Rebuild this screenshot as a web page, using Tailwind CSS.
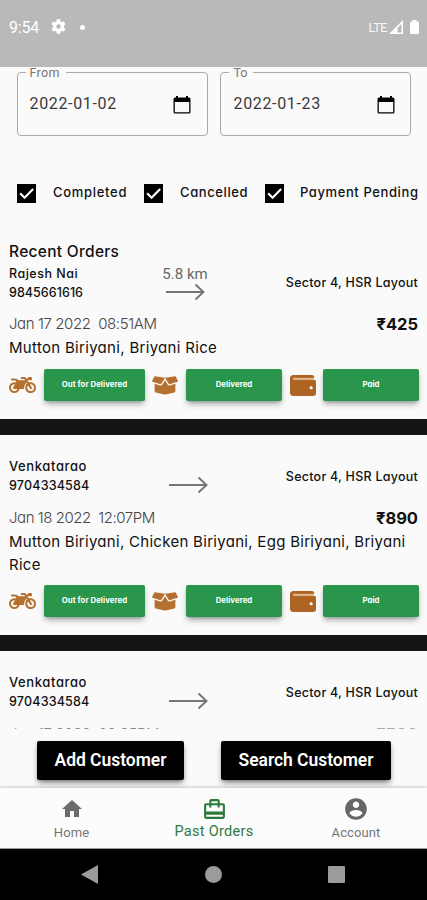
<!DOCTYPE html>
<html lang="en">
<head>
<meta charset="utf-8">
<meta name="viewport" content="width=device-width, initial-scale=1">
<title>Past Orders</title>
<script src="https://cdn.jsdelivr.net/npm/@tailwindcss/browser@4"></script>
</head>
<body class="w-[427px] h-[900px] overflow-hidden bg-[#fafafa] font-['Inter',sans-serif] text-[#111] [font-feature-settings:'cv11'] flex flex-col">
<svg class="hidden">
  <symbol id="bike" viewBox="0 0 640 512"><path d="M512.9 192c-14.9-.1-29.1 2.3-42.4 6.9L437.6 144H520c13.3 0 24-10.7 24-24V88c0-13.3-10.7-24-24-24h-45.3c-6.8 0-13.3 2.9-17.8 7.9l-37.5 41.7-22.8-38C392.2 68.4 384.4 64 376 64h-80c-8.8 0-16 7.2-16 16v16c0 8.8 7.2 16 16 16h66.4l19.2 32H227.9c-17.7-23.1-44.9-40-99.9-40H72.5C59 104 47.7 115 48 128.5c.2 13 10.9 23.5 24 23.5h56c24.5 0 38.7 10.9 47.8 24.8l-11.3 20.5c-13-3.9-26.9-5.7-41.3-5.2C55.9 194.5 1.6 249.6 0 317c-1.6 72.1 56.3 131 128 131 59.6 0 109.7-40.8 124-96h84.2c13.7 0 24.6-11.4 24-25.1-2.1-47.1 17.5-93.7 56.2-125l12.5 20.8c-27.6 23.7-45.1 58.9-44.8 98.2.5 69.6 57.2 126.5 126.8 127.1 71.6.7 129.8-57.5 129.2-129.1-.7-69.6-57.6-126.4-127.2-126.9zM128 400c-44.1 0-80-35.9-80-80s35.9-80 80-80c4.2 0 8.4.3 12.5 1L99 316.4c-8.8 16 2.8 35.6 21 35.6h81.3c-12.4 28.2-40.6 48-73.3 48zm463.9-75.6c-2.2 40.6-35 73.4-75.5 75.5-46.1 2.5-84.4-34.3-84.4-79.9 0-21.4 8.4-40.8 22.1-55.1l49.4 82.4c4.5 7.6 14.4 10 22 5.500l13.7-8.2c7.6-4.5 10-14.4 5.500-22l-48.6-80.9c5.2-1.1 10.5-1.6 15.9-1.6 45.6-.1 82.3 38.2 79.9 84.3z"/></symbol>
  <symbol id="box" viewBox="0 24 640 464" preserveAspectRatio="none"><path d="M425.7 256c-16.9 0-32.8-9-41.4-23.4L320 126l-64.2 106.6c-8.7 14.5-24.6 23.5-41.5 23.5-4.5 0-9-.6-13.3-1.9L64 215v178c0 14.7 10 27.5 24.2 31l216.2 54.1c10.2 2.5 20.9 2.5 31 0L551.8 424c14.2-3.6 24.2-16.4 24.2-31V215l-137 39.1c-4.3 1.3-8.8 1.9-13.3 1.9zm212.6-112.2L586.8 41c-3.1-6.2-9.8-9.8-16.7-8.9L320 64l91.7 152.1c3.8 6.3 11.4 9.3 18.5 7.3l197.9-56.5c9.9-2.9 14.7-13.9 10.2-23.1zM53.2 41L1.7 143.8c-4.6 9.2.3 20.2 10.1 23l197.9 56.5c7.1 2 14.7-1 18.5-7.3L320 64 69.8 32.1c-6.9-.8-13.5 2.7-16.6 8.9z"/></symbol>
  <symbol id="wallet" viewBox="0 32 512 448" preserveAspectRatio="none"><path d="M461.2 128H80c-8.84 0-16-7.16-16-16s7.16-16 16-16h384c8.84 0 16-7.16 16-16 0-26.51-21.49-48-48-48H64C28.65 32 0 60.65 0 96v320c0 35.35 28.65 64 64 64h397.2c28.02 0 50.8-21.53 50.8-48V176c0-26.47-22.78-48-50.8-48zM416 336c-17.67 0-32-14.33-32-32s14.33-32 32-32 32 14.33 32 32-14.33 32-32 32z"/><path class="fill-[#dfb68e]" d="M64 92H464V134H64Z"/></symbol>
  <symbol id="arrow" viewBox="0 0 39 18"><path d="M0 9H37M29.500 1.500L37.500 9L29.500 16.500" fill="none" stroke="#757575" stroke-width="1.900"/></symbol>
  <symbol id="check" viewBox="0 0 20 20"><path d="M0 0H20V20H0Z"/><path d="M3.300 9.800L8 14.400L17 5.200" fill="none" stroke="#fff" stroke-width="2.300"/></symbol>
  <symbol id="cal" viewBox="0 0 18 18"><path d="M3 0H5V1.500H13V0H15V1.500H16Q17.500 1.500 17.500 3V16Q17.500 17.500 16 17.500H2Q.5 17.500 .5 16V3Q.5 1.500 2 1.500H3ZM1.800 6V16.200H16.200V6Z" fill-rule="evenodd"/></symbol>
</svg>

<header class="h-[67px] shrink-0 bg-[#b9b9b9] flex items-start pt-[18px] pl-[9px] pr-[8px] text-white font-['Roboto',sans-serif]">
  <span class="text-[16px] leading-[20px] w-[42px] tracking-[-0.200px]">9:54</span>
  <svg class="w-[15px] h-[15px] mt-[1px]" viewBox="2 2 20 20" fill="#fff"><path d="M19.140 12.940c.04-.3.060-.61.060-.94 0-.32-.02-.64-.07-.94l2.030-1.580c.18-.14.23-.41.12-.61l-1.920-3.320c-.12-.22-.37-.29-.59-.22l-2.390.96c-.5-.38-1.030-.7-1.620-.94l-.36-2.540c-.04-.24-.24-.41-.48-.41h-3.840c-.24 0-.43.17-.47.41l-.36 2.540c-.59.24-1.130.57-1.620.94l-2.390-.96c-.22-.08-.47 0-.59.22L2.740 8.870c-.12.21-.08.47.12.61l2.030 1.580c-.05.3-.09.63-.09.94s.02.64.07.94l-2.030 1.580c-.18.14-.23.41-.12.61l1.920 3.320c.12.22.37.29.59.22l2.390-.96c.5.38 1.030.7 1.620.94l.36 2.540c.05.24.24.41.48.41h3.840c.24 0 .44-.17.47-.41l.36-2.540c.59-.24 1.130-.56 1.620-.94l2.390.96c.22.08.47 0 .59-.22l1.920-3.320c.12-.22.07-.47-.12-.61l-2.010-1.580zM12 15a3 3 0 1 1 0-6 3 3 0 0 1 0 6z"/></svg>
  <span class="size-[5px] rounded-full bg-white ml-[14px] mt-[7px]"></span>
  <span class="ml-auto text-[12.500px] leading-[19px] tracking-[-0.400px] text-white/90">LTE</span>
  <svg class="w-[14px] h-[14px] ml-[2px] mt-[2px]" viewBox="0 0 14 14"><path fill-rule="evenodd" fill="#fff" d="M14 0V14H0ZM12.500 4L8.500 8V12.500H12.500Z"/></svg>
  <svg class="w-[9px] h-[14px] ml-[7px] mt-[2px]" viewBox="0 0 9 14"><path fill="#fff" d="M2.500 0H6.500V1.500H8Q9 1.500 9 2.500V13Q9 14 8 14H1Q0 14 0 13V2.500Q0 1.500 1 1.500H2.500Z"/></svg>
</header>

<main class="h-[662px] shrink-0 overflow-hidden">
  <section class="flex gap-[12px] px-[16.500px] pt-[5px] font-['Roboto',sans-serif]">
    <div class="relative w-[192px] h-[64px] border border-[#aaa] rounded-[4px] flex items-center justify-between pl-[12px] pr-[17px]">
      <span class="absolute left-[8px] top-[-8px] bg-[#fafafa] pl-[4px] pr-[6px] text-[12.500px] leading-[16px] tracking-[0.300px] text-[#777]">From</span>
      <span class="text-[16px] tracking-[0.650px] text-[#3a3a3a] -mt-px">2022-01-02</span>
      <svg class="size-[18px] -mr-px mt-[2px]"><use href="#cal"/></svg>
    </div>
    <div class="relative w-[192px] h-[64px] border border-[#aaa] rounded-[4px] flex items-center justify-between pl-[13px] pr-[16px]">
      <span class="absolute left-[8px] top-[-8px] bg-[#fafafa] pl-[5px] pr-[6px] text-[12.500px] leading-[16px] text-[#777]">To</span>
      <span class="text-[16px] tracking-[0.650px] text-[#3a3a3a] -mt-px">2022-01-23</span>
      <svg class="size-[18px] -mr-px mt-[2px]"><use href="#cal"/></svg>
    </div>
  </section>

  <section class="flex items-center mt-[47px] pl-[17px] h-[20px] text-[13px] font-medium whitespace-nowrap">
    <svg class="size-[19px] mr-[17px] shrink-0"><use href="#check"/></svg><span class="w-[91px] tracking-[0.700px]">Completed</span>
    <svg class="size-[19px] mr-[17px] shrink-0"><use href="#check"/></svg><span class="w-[85px] tracking-[0.600px]">Cancelled</span>
    <svg class="size-[19px] mr-[16px] shrink-0"><use href="#check"/></svg><span class="tracking-[0.600px]">Payment Pending</span>
  </section>

  <h1 class="mt-[37px] ml-[9px] h-[24px] leading-[24px] text-[15.500px] font-medium tracking-[0.300px]">Recent Orders</h1>

  <article class="pl-[9px] pr-[8px] h-[155px]">
    <div class="flex h-[39px] pr-px text-[12.500px] font-medium leading-[19px]">
      <div class="w-[148px]"><p class="tracking-[0.500px]">Rajesh Nai</p><p class="tracking-[0.050px]">9845661616</p></div>
      <div class="w-[56px] flex flex-col items-center font-['Roboto',sans-serif] font-normal text-[15px] text-[#666] leading-[20px]"><span class="whitespace-nowrap">5.8 km</span><svg class="w-[39px] h-[18px] -mt-px"><use href="#arrow"/></svg></div>
      <p class="ml-auto pt-[9px] whitespace-nowrap tracking-[0.250px]">Sector 4, HSR Layout</p>
    </div>
    <div class="flex justify-between mt-[10px] pr-px h-[22px] leading-[22px]">
      <p class="text-[15px] font-light tracking-[-0.400px] text-[#444] whitespace-pre">Jan 17 2022  08:51AM</p><p class="text-[16.500px] font-bold">₹425</p>
    </div>
    <p class="mt-[1px] text-[15px] leading-[23px] tracking-[0.310px]">Mutton Biriyani, Briyani Rice</p>
    <div class="flex items-center mt-[10px] h-[32px] text-[7.800px] tracking-[0.050px] font-bold text-white">
      <svg class="w-[27px] h-[22px] fill-[#b5702f]"><use href="#bike"/></svg>
      <div class="w-[101px] h-[32px] ml-[8px] rounded-[2px] bg-[#2a964b] shadow-md shadow-black/30 flex items-center justify-center">Out for Delivered</div>
      <svg class="w-[26px] h-[19px] ml-[7px] fill-[#b5702f]"><use href="#box"/></svg>
      <div class="w-[96px] h-[32px] ml-[8px] rounded-[2px] bg-[#2a964b] shadow-md shadow-black/30 flex items-center justify-center">Delivered</div>
      <svg class="w-[26px] h-[21px] ml-[8px] fill-[#ae6523]"><use href="#wallet"/></svg>
      <div class="w-[96px] h-[32px] ml-[7px] rounded-[2px] bg-[#2a964b] shadow-md shadow-black/30 flex items-center justify-center">Paid</div>
    </div>
  </article>

  <div class="h-[16px] bg-[#141414]"></div>

  <article class="pl-[9px] pr-[8px] pt-[22px] h-[200px]">
    <div class="flex h-[39px] pr-px text-[12.500px] font-medium leading-[19px]">
      <div class="w-[160px]"><p class="text-[13px] tracking-[0.600px]">Venkatarao</p><p class="tracking-[0.200px]">9704334584</p></div>
      <svg class="w-[39px] h-[18px] mt-[19px]"><use href="#arrow"/></svg>
      <p class="ml-auto pt-[10px] whitespace-nowrap tracking-[0.250px]">Sector 4, HSR Layout</p>
    </div>
    <div class="flex justify-between mt-[11px] pr-px h-[22px] leading-[22px]">
      <p class="text-[15px] font-light tracking-[-0.450px] text-[#444] whitespace-pre">Jan 18 2022  12:07PM</p><p class="text-[16.500px] font-bold">₹890</p>
    </div>
    <p class="mt-px text-[15px] leading-[23px] whitespace-nowrap tracking-[0.290px]">Mutton Biriyani, Chicken Biriyani, Egg Biriyani, Briyani<br>Rice</p>
    <div class="flex items-center mt-[9px] h-[32px] text-[7.800px] tracking-[0.050px] font-bold text-white">
      <svg class="w-[27px] h-[22px] fill-[#b5702f]"><use href="#bike"/></svg>
      <div class="w-[101px] h-[32px] ml-[8px] rounded-[2px] bg-[#2a964b] shadow-md shadow-black/30 flex items-center justify-center">Out for Delivered</div>
      <svg class="w-[26px] h-[19px] ml-[7px] fill-[#b5702f]"><use href="#box"/></svg>
      <div class="w-[96px] h-[32px] ml-[8px] rounded-[2px] bg-[#2a964b] shadow-md shadow-black/30 flex items-center justify-center">Delivered</div>
      <svg class="w-[26px] h-[21px] ml-[8px] fill-[#ae6523]"><use href="#wallet"/></svg>
      <div class="w-[96px] h-[32px] ml-[7px] rounded-[2px] bg-[#2a964b] shadow-md shadow-black/30 flex items-center justify-center">Paid</div>
    </div>
  </article>

  <div class="h-[16px] bg-[#141414]"></div>

  <article class="px-[9px] pt-[22px]">
    <div class="flex h-[39px] text-[12.500px] font-medium leading-[19px]">
      <div class="w-[160px]"><p class="text-[13px] tracking-[0.600px]">Venkatarao</p><p class="tracking-[0.200px]">9704334584</p></div>
      <svg class="w-[39px] h-[18px] mt-[19px]"><use href="#arrow"/></svg>
      <p class="ml-auto pt-[10px] whitespace-nowrap tracking-[0.250px]">Sector 4, HSR Layout</p>
    </div>
    <div class="flex justify-between mt-[11px] h-[22px] leading-[22px]">
      <p class="text-[15px] font-light tracking-[-0.400px] text-[#888] whitespace-pre">Jan 17 2022  08:25PM</p><p class="text-[16.500px] font-bold text-[#aaa]">₹580</p>
    </div>
  </article>
</main>

<section class="h-[59px] shrink-0 flex items-start pt-[12px] pl-[37px] gap-[37px] font-['Roboto',sans-serif] text-[17.500px] font-semibold tracking-[-0.050px] text-white">
  <button class="w-[147px] h-[39px] bg-black rounded-[2px] shadow-md shadow-black/40 whitespace-nowrap">Add Customer</button>
  <button class="w-[170px] h-[39px] bg-black rounded-[2px] shadow-md shadow-black/40 whitespace-nowrap">Search Customer</button>
</section>

<nav class="h-[61px] shrink-0 bg-[#fcfcfc] border-b border-[#999] shadow-[0_-1px_3px_rgba(0,0,0,0.2)] flex font-['Roboto',sans-serif] text-[#757575] text-[13px]">
  <a class="w-[143px] flex flex-col items-center pt-[9px]"><svg class="size-[24px]" viewBox="0 0 24 24" fill="#6b6b6b"><path d="M10 20v-6h4v6h5v-8h3L12 3 2 12h3v8z"/></svg><span class="leading-[16px] mt-[4px] tracking-[0.100px]">Home</span></a>
  <a class="w-[142px] flex flex-col items-center pt-[9px] text-[#2f7a3f]"><svg class="size-[25px]" viewBox="0 0 24 24" fill="#2a7a3a"><path d="M20 6h-3V4c0-1.110-.89-2-2-2H9c-1.110 0-2 .89-2 2v2H4c-1.110 0-2 .89-2 2v11c0 1.110.89 2 2 2h16c1.110 0 2-.89 2-2V8c0-1.110-.89-2-2-2zM9 4h6v2H9V4zm11 15H4v-2h16v2zm0-5H4V8h3v2h2V8h6v2h2V8h3v6z"/></svg><span class="text-[14.500px] leading-[18px] mt-px tracking-[0.300px]">Past Orders</span></a>
  <a class="w-[142px] flex flex-col items-center pt-[8px]"><svg class="size-[26px]" viewBox="0 0 24 24" fill="#666"><path d="M12 2C6.480 2 2 6.480 2 12s4.480 10 10 10 10-4.480 10-10S17.520 2 12 2zm0 3c1.660 0 3 1.340 3 3s-1.340 3-3 3-3-1.340-3-3 1.340-3 3-3zm0 14.200c-2.500 0-4.710-1.280-6-3.220.03-1.990 4-3.080 6-3.080 1.990 0 5.970 1.090 6 3.080-1.290 1.940-3.500 3.220-6 3.220z"/></svg><span class="leading-[16px] mt-[3px] tracking-[0.100px]">Account</span></a>
</nav>

<footer class="h-[51px] shrink-0 bg-black flex items-center justify-between pl-[81px] pr-[82px] fill-[#9b9b9b]">
  <svg class="w-[17px] h-[19px]" viewBox="0 0 17 19"><path d="M17 0V19L0 9.500Z"/></svg>
  <svg class="size-[17px]" viewBox="0 0 17 17"><circle cx="8.500" cy="8.500" r="8.500"/></svg>
  <svg class="size-[17px]" viewBox="0 0 17 17"><rect width="17" height="17" rx="1"/></svg>
</footer>
</body>
</html>
